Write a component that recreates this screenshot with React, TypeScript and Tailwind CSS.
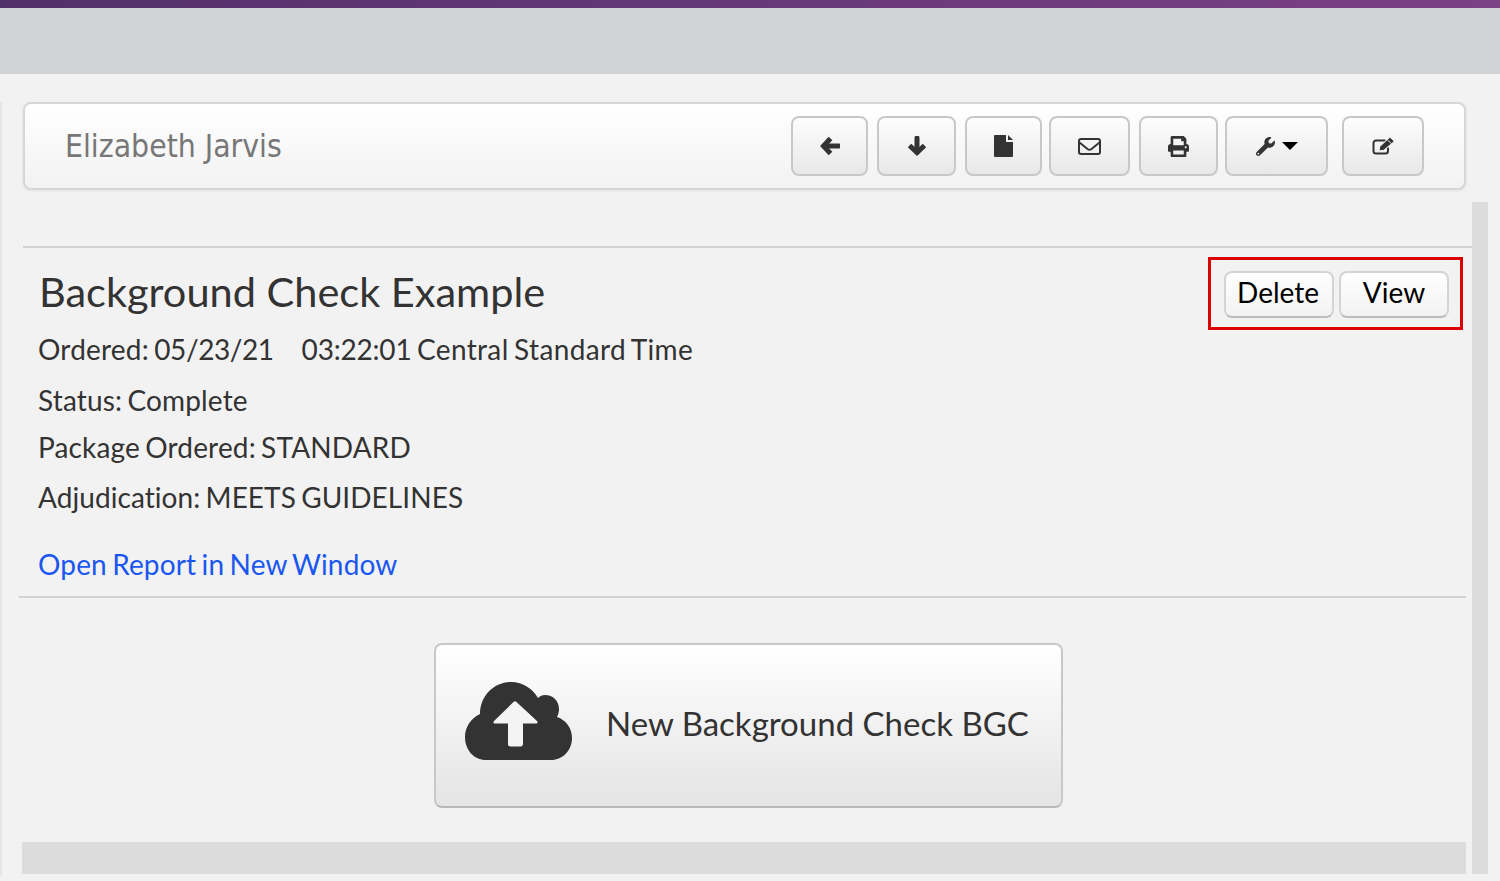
import { FaPrint, FaWrench } from 'react-icons/fa'
import type { ReactNode } from 'react'

function ToolButton({ width, marginLeft, children }: { width: string; marginLeft: string; children: ReactNode }) {
  return (
    <button
      className={`${width} ${marginLeft} h-[60px] flex items-center justify-center rounded-[8px] border-2 border-[#c8c8c8] bg-gradient-to-b from-[#fdfdfd] to-[#e8e8e8] text-[#333]`}
    >
      {children}
    </button>
  )
}

function ArrowLeftIcon() {
  return (
    <svg width="20" height="20" viewBox="0 0 20 20" fill="none" stroke="#333" strokeWidth="5" strokeLinejoin="miter">
      <path d="M10.500 2.500 3.500 10l7 7.500" />
      <path d="M4 10h15" strokeLinecap="round" />
    </svg>
  )
}

function ArrowDownIcon() {
  return (
    <svg width="20" height="20" viewBox="0 0 20 20" fill="none" stroke="#333" strokeWidth="5" strokeLinejoin="miter">
      <path d="M2.500 9.500l7.500 7 7.500-7" />
      <path d="M10 16V2" strokeLinecap="round" />
    </svg>
  )
}

function FileIcon() {
  return (
    <svg width="20" height="22" viewBox="0 0 20 22" fill="#333">
      <path d="M1 0h11v7h7v14a1 1 0 0 1-1 1H1a1 1 0 0 1-1-1V1a1 1 0 0 1 1-1z" />
      <path d="M14 0l5 5h-5z" />
    </svg>
  )
}

function MailIcon() {
  return (
    <svg width="23" height="19" viewBox="0 0 23 19" fill="none" stroke="#333" strokeWidth="2">
      <rect x="1" y="2" width="21" height="15" rx="2" />
      <path d="M1.500 5.500l8 6.500c1.200.9 2.800.9 4 0l8-6.500" />
    </svg>
  )
}

function EditIcon() {
  return (
    <svg width="23" height="18" viewBox="0 0 23 18" fill="none">
      <path d="M16 10.500V14a2.500 2.500 0 0 1-2.500 2.500H4A2.500 2.500 0 0 1 1.500 14V6A2.500 2.500 0 0 1 4 3.500h9.500" stroke="#333" strokeWidth="2" />
      <path d="M7 14l.8-4.500L17.200.8c.4-.4 1-.4 1.400 0l3 2.800c.4.4.4 1 0 1.400l-9.700 8.200z" fill="#333" stroke="#f6f6f6" strokeWidth="1" />
      <path d="M15.500 3l3.800 3.500" stroke="#f6f6f6" strokeWidth="1" />
    </svg>
  )
}

function CloudIcon() {
  return (
    <svg width="108" height="78" viewBox="0 0 108 78">
      <path
        d="M21 78C9 78 0 68 0 55c0-10 6-19 15-23C15 14 29 0 46 0c12 0 22 7 27 16 2-2 4-3 7-3 8 0 14 6 14 14 0 3-1 6-2 8 9 3 15 11 15 21 0 12-9 22-21 22z"
        fill="#333"
      />
      <path d="M48.500 20a2 2 0 0 1 3 0l20.500 19c1 1 .5 2.500-1 2.500H58V62c0 1.500-1 2.500-2.500 2.500h-10C44 64.500 43 63.500 43 62V41.500H30c-1.500 0-2-1.500-1-2.500z" fill="#f4f4f4" />
    </svg>
  )
}

export default function App() {
  return (
    <div className="h-[881px] overflow-hidden bg-[#f2f2f2] font-['Lato','Open_Sans',sans-serif] text-[#333]">
      <div className="h-2 bg-gradient-to-r from-[#52306a] to-[#7b4186]" />
      <div className="h-[66px] bg-[#d2d3d5]" />

      <div className="mt-[33px] h-[774px] border-l-2 border-[#e6e6e6] pl-[21px]">
        <div className="mt-[-5px] flex h-[88px] w-[1443px] items-center rounded-[8px] border-2 border-[#d6d6d6] bg-gradient-to-b from-white to-[#f2f2f2] pl-[40px] shadow-[0_1px_3px_rgba(0,0,0,0.08)]">
          <div className="mt-[2px] w-[726px] text-[31.6px] leading-none text-[#777] font-['DejaVu_Sans_Condensed','DejaVu_Sans',sans-serif]">Elizabeth Jarvis</div>
          <ToolButton width="w-[77px]" marginLeft="ml-0"><ArrowLeftIcon /></ToolButton>
          <ToolButton width="w-[79px]" marginLeft="ml-[9px]"><ArrowDownIcon /></ToolButton>
          <ToolButton width="w-[77px]" marginLeft="ml-[9px]"><FileIcon /></ToolButton>
          <ToolButton width="w-[81px]" marginLeft="ml-[7px]"><MailIcon /></ToolButton>
          <ToolButton width="w-[79px]" marginLeft="ml-[9px]"><FaPrint size={21} /></ToolButton>
          <ToolButton width="w-[103px]" marginLeft="ml-[7px]">
            <FaWrench size={19} className="mr-[7px]" />
            <span className="h-0 w-0 border-x-[8px] border-t-[8px] border-x-transparent border-t-black" />
          </ToolButton>
          <ToolButton width="w-[82px]" marginLeft="ml-[14px]"><EditIcon /></ToolButton>
        </div>

        <div className="mt-[12px] flex h-[672px]">
          <div className="w-[1449px]">
            <div className="mt-[44px] h-[350px] border-t-2 border-[#d2d2d2]">
              <div className="flex items-start justify-between pr-[9px]">
                <div className="pl-[16px] pt-[15px] [font-variant-ligatures:none]">
                  <h1 className="text-[41.5px] leading-[56px]">Background Check Example</h1>
                  <div className="ml-[-1px] [word-spacing:-2px]">
                    <p className="mt-[2px] flex gap-[28px] text-[28px] leading-[56px] tracking-[0.2px] whitespace-nowrap">
                      <span>
                        Ordered: <span className="tracking-[-0.43px]">05/23/21</span>
                      </span>
                      <span className="tracking-[0.35px]">
                        <span className="tracking-[-0.2px]">03:22:01</span> Central Standard Time
                      </span>
                    </p>
                    <p className="mt-[-5px] text-[28px] leading-[56px] tracking-[0.15px]">Status: Complete</p>
                    <p className="mt-[-9px] text-[28px] leading-[56px] tracking-[0.15px]">Package Ordered: STANDARD</p>
                    <p className="mt-[-6px] text-[28px] leading-[56px] tracking-[0.07px]">Adjudication: MEETS GUIDELINES</p>
                    <a className="mt-[11px] block text-[28px] leading-[56px] tracking-[0.15px] text-[#1a56f0]">Open Report in New Window</a>
                  </div>
                </div>
                <div className="mt-[9px] flex h-[73px] w-[255px] items-center gap-[5px] border-[3px] border-[#dc0000] pl-[13px]">
                  <button className="mt-[2px] h-[47px] w-[110px] rounded-[8px] border-2 border-[#d4d4d4] border-b-[#bdbdbd] bg-gradient-to-b from-white to-[#f2f2f2] pb-[5px] pr-[2px] text-[28px] leading-none text-black">Delete</button>
                  <button className="mt-[2px] h-[47px] w-[110px] rounded-[8px] border-2 border-[#d4d4d4] border-b-[#bdbdbd] bg-gradient-to-b from-white to-[#f2f2f2] pb-[5px] text-[28px] leading-none text-black">View</button>
                </div>
              </div>
            </div>
            <div className="ml-[-4px] h-[2px] w-[1447px] bg-[#d2d2d2]" />

            <div className="mt-[45px] ml-[411px] flex h-[165px] w-[629px] items-center rounded-[8px] border-2 border-[#c8c8c8] border-b-[#b8b8b8] bg-gradient-to-b from-white to-[#e4e4e4] pl-[29px]">
              <div className="mt-[-9px] flex"><CloudIcon /></div>
              <span className="ml-[33px] mt-[-4px] text-[33px] whitespace-nowrap">New Background Check BGC</span>
            </div>

            <div className="mt-[34px] ml-[-1px] h-[32px] w-[1444px] bg-[#dcdcdc]" />
          </div>
          <div className="h-full w-[16px] bg-[#dcdcdc]" />
        </div>
      </div>
    </div>
  )
}
